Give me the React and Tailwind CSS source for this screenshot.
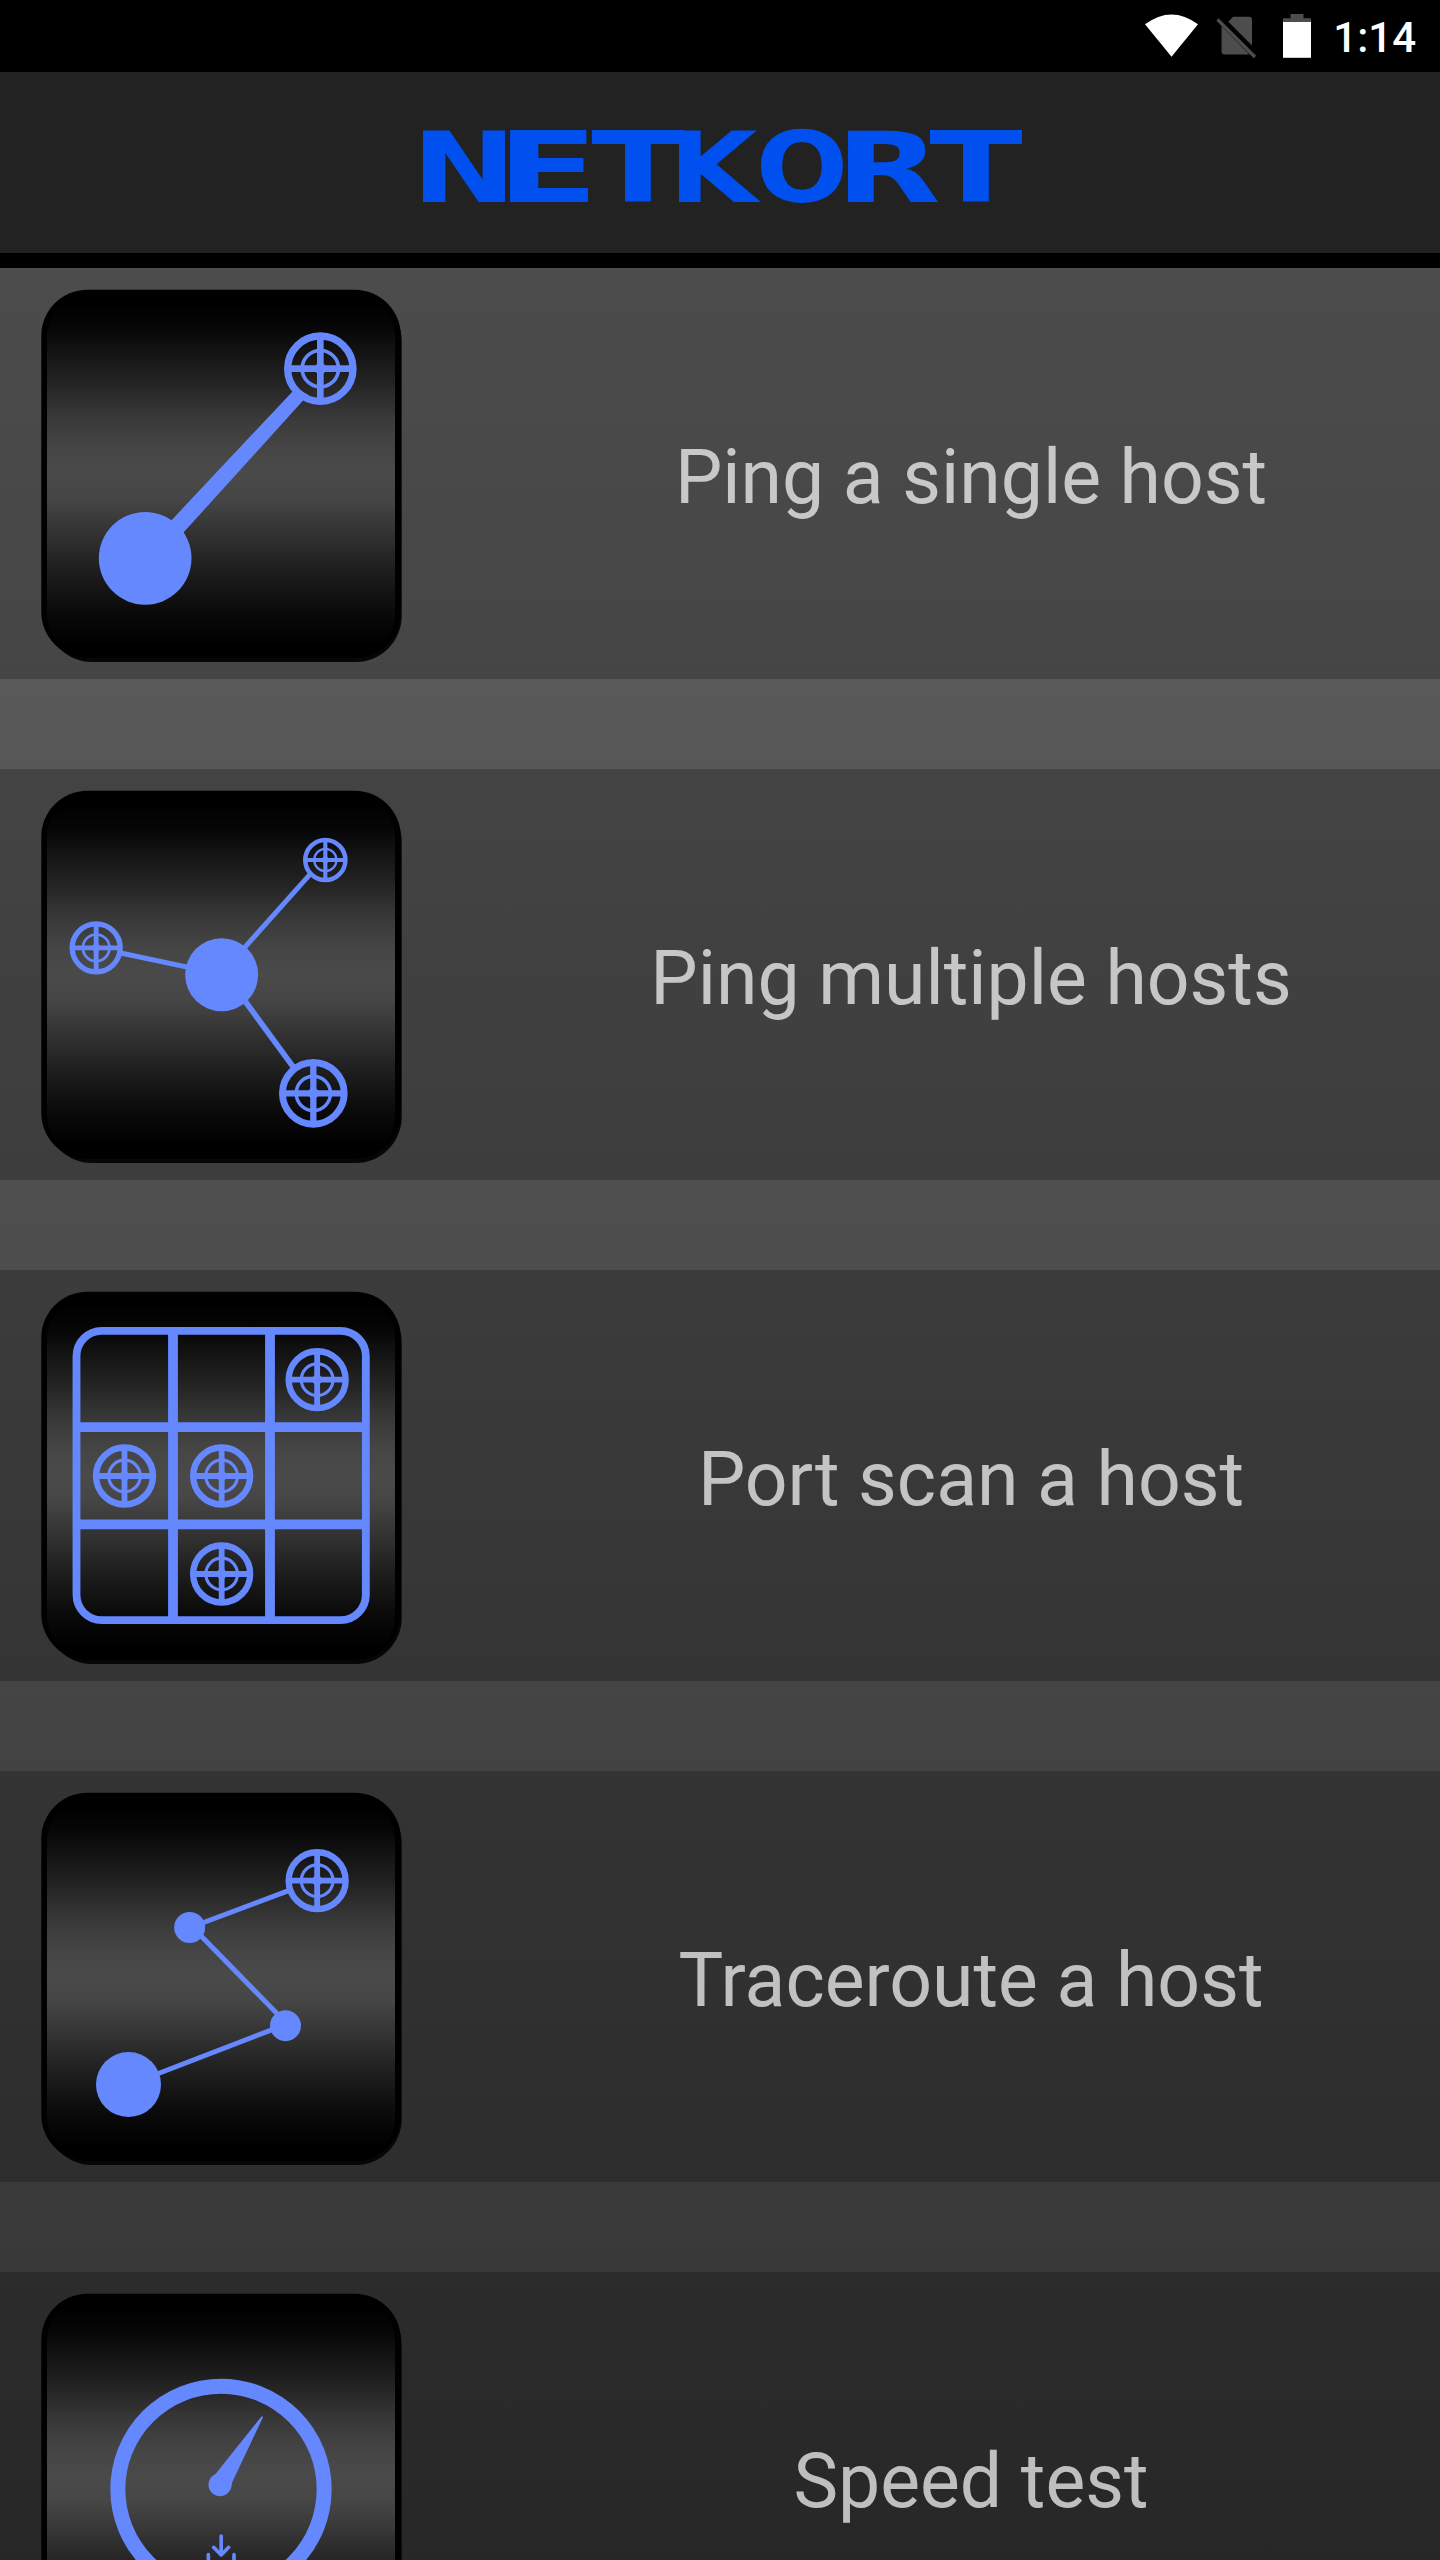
import React from "react";

const BLUE = "#6688ff";

function Target({ x, y, r }) {
  return (
    <g transform={`translate(${x} ${y}) scale(${r / 109})`} fill="none" stroke={BLUE}>
      <circle r="98" strokeWidth="22" />
      <circle r="54.5" strokeWidth="11" />
      <path d="M-98 0H98M0 -98V98" strokeWidth="20" />
      <path d="M-16 -8L-8 -16H8L16 -8V8L8 16H-8L-16 8Z" fill={BLUE} stroke="none" />
    </g>
  );
}

function Tile({ id, offset, children }) {
  return (
    <svg className="block h-[411px] w-[440px] shrink-0" viewBox="0 0 440 411">
      <defs>
        <linearGradient id={id} gradientUnits="userSpaceOnUse" x1="0" y1="27" x2="0" y2="389">
          <stop offset="0.02" stopColor="#000000" />
          <stop offset="0.09" stopColor="#060606" />
          <stop offset="0.15" stopColor="#121212" />
          <stop offset="0.24" stopColor="#232323" />
          <stop offset="0.34" stopColor="#393939" />
          <stop offset="0.42" stopColor="#454545" />
          <stop offset="0.49" stopColor="#4a4a4a" />
          <stop offset="0.56" stopColor="#464646" />
          <stop offset="0.65" stopColor="#343434" />
          <stop offset="0.76" stopColor="#1e1e1e" />
          <stop offset="0.88" stopColor="#090909" />
          <stop offset="0.97" stopColor="#000000" />
        </linearGradient>
      </defs>
      <rect x="46" y="27" width="355.7" height="367" rx="46" fill="#060606" />
      <rect x="41.3" y="21.7" width="359.5" height="368.3" rx="46" fill="#000" />
      <rect x="47" y="27" width="348" height="361" rx="41" fill={`url(#${id})`} />
      <g transform={`translate(0 ${offset}) scale(0.33333)`}>{children}</g>
    </svg>
  );
}

function SingleHost() {
  return (
    <>
      <path d="M500 856L515 840L877 455L890 445L925 465L910 481L551 877L530 900Z" fill={BLUE} />
      <circle cx="435.5" cy="955" r="139" fill={BLUE} />
      <Target x={961} y={386} r={109} />
    </>
  );
}

function MultipleHosts() {
  return (
    <>
      <g stroke={BLUE} fill="none">
        <path d="M665 640L930 343" strokeWidth="15" />
        <path d="M362 579L665 643" strokeWidth="15" />
        <path d="M680 648L879 920" strokeWidth="17" />
      </g>
      <circle cx="665" cy="644" r="109.5" fill={BLUE} />
      <Target x={976} y={300} r={67} />
      <Target x={288.5} y={563.5} r={80} />
      <Target x={940} y={1000} r={103} />
    </>
  );
}

function PortScan() {
  return (
    <>
      <g stroke={BLUE} fill="none">
        <rect x="229.5" y="212.5" width="868" height="868" rx="76" strokeWidth="23.5" />
        <path d="M519 212V1080M810 212V1080M230 501.5H1098M230 793H1098" strokeWidth="29.5" />
      </g>
      <Target x={951.5} y={359} r={95} />
      <Target x={373.5} y={648} r={95} />
      <Target x={665} y={648} r={95} />
      <Target x={665} y={942} r={95} />
    </>
  );
}

function Traceroute() {
  return (
    <>
      <g stroke={BLUE} strokeWidth="15" fill="none">
        <path d="M868 391L575 501" />
        <path d="M569 493L850 780" />
        <path d="M850 796L440 954" />
      </g>
      <circle cx="569" cy="502.5" r="46.5" fill={BLUE} />
      <circle cx="856.5" cy="797" r="46.5" fill={BLUE} />
      <circle cx="385.5" cy="973.5" r="97.5" fill={BLUE} />
      <Target x={951.5} y={362} r={95} />
    </>
  );
}

function SpeedTest() {
  return (
    <>
      <circle cx="663" cy="748" r="309.5" fill="none" stroke={BLUE} strokeWidth="45" />
      <circle cx="660" cy="734" r="34.5" fill={BLUE} />
      <path d="M640 708Q648 702 652 695L784 530Q788 527 789 532L698 724Q694 732 694 740Z" fill={BLUE} />
      <g fill="none" stroke={BLUE} strokeWidth="11" strokeLinecap="round" strokeLinejoin="round">
        <path d="M663.5 888V944M641 922L663.5 945L686 922" />
        <path d="M625 944V990H702V944" />
      </g>
    </>
  );
}

const items = [
  { id: "single", label: "Ping a single host", offset: -28, Art: SingleHost },
  { id: "multiple", label: "Ping multiple hosts", offset: -9, Art: MultipleHosts },
  { id: "ports", label: "Port scan a host", offset: -10, Art: PortScan },
  { id: "trace", label: "Traceroute a host", offset: -11, Art: Traceroute },
  { id: "speed", label: "Speed test", offset: -32, Art: SpeedTest },
];

function StatusBar() {
  return (
    <div className="flex h-[72px] shrink-0 items-center justify-end bg-black pr-[24px]">
      <svg className="h-[72px] w-[200px]" viewBox="0 0 200 72">
        <path d="M9 24.3Q35.5 4.5 62 24.3L35.5 56.7Z" fill="#fff" />
        <g fill="#4d4d4d">
          <path d="M92.3 21.7L97 16.7H113Q116 16.7 116 19.7V45.4Z" />
          <path d="M85.5 26L113.5 54.5H89Q85.5 54.5 85.5 51Z" />
        </g>
        <path d="M81.5 19.5L119 57" stroke="#4d4d4d" strokeWidth="3.2" />
        <path d="M147 22.3V18.3H154.5V14H167.5V18.3H175V22.3Z" fill="#4d4d4d" />
        <path d="M147 22H175V57.8H147Z" fill="#fff" />
      </svg>
      <span className="ml-[-3px] pt-[4px] text-[42px] leading-none font-medium text-white">1:14</span>
    </div>
  );
}

const wordmark = [
  ["N", 411.5, 105],
  ["E", 496.2, 102.7],
  ["T", 591.3, 93.4],
  ["K", 668.4, 88.9],
  ["O", 755.5, 92.9],
  ["R", 835.4, 105.3],
  ["T", 929.3, 93.4],
];

function Logo() {
  return (
    <svg className="h-[160px] w-[660px]" viewBox="390 83 660 160" role="img" aria-label="NETKORT">
      <text
        y="201.7"
        fontFamily="'DejaVu Sans', sans-serif"
        fontWeight="700"
        fontSize="98.5"
        fill="#0050f0"
      >
        {wordmark.map(([letter, x, length]) => (
          <tspan key={x} x={x} textLength={length} lengthAdjust="spacingAndGlyphs">
            {letter}
          </tspan>
        ))}
      </text>
    </svg>
  );
}

export default function App() {
  return (
    <div className="flex h-[2560px] w-[1440px] flex-col overflow-hidden bg-black font-['Roboto',sans-serif]">
      <StatusBar />
      <header className="flex h-[181px] shrink-0 items-center justify-center bg-[#222222]">
        <Logo />
      </header>
      <div className="h-[15px] shrink-0 bg-black" />
      <main className="flex min-h-0 flex-1 flex-col gap-[90px] overflow-hidden bg-linear-to-b from-[#626262] to-[#333333]">
        {items.map(({ id, label, offset, Art }) => (
          <div key={id} className="flex h-[411px] shrink-0 items-center bg-black/22">
            <Tile id={id} offset={offset}>
              <Art />
            </Tile>
            <div className="ml-[62px] flex-1 pt-[9px] text-center text-[75.1px] leading-none whitespace-nowrap text-white/70">
              {label}
            </div>
          </div>
        ))}
      </main>
    </div>
  );
}
